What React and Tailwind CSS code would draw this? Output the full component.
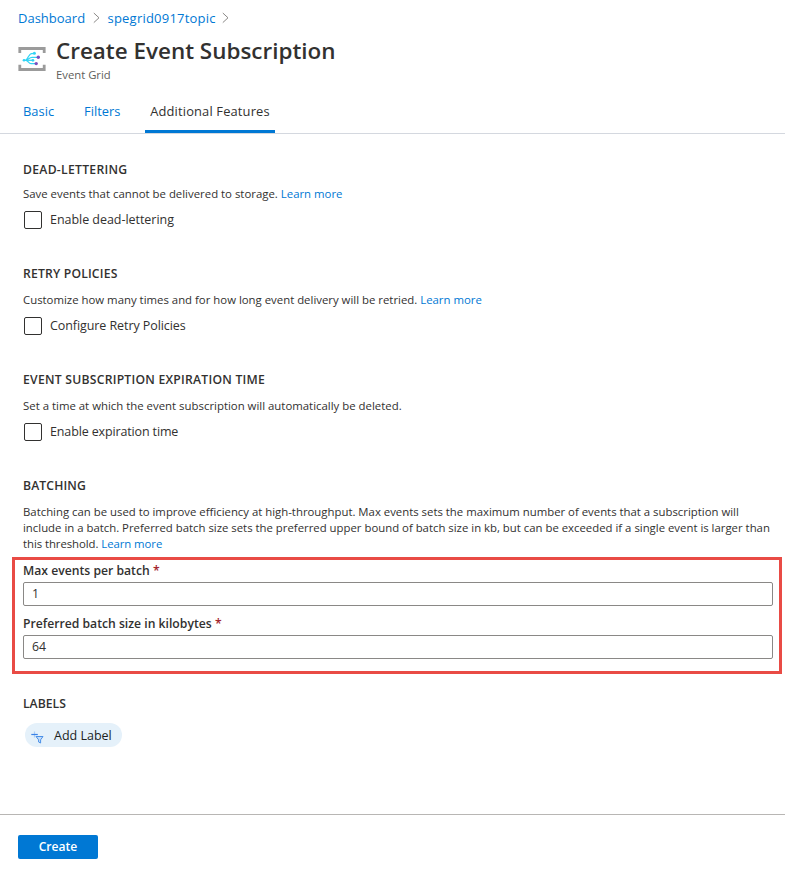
import React from "react";

const link = "text-[#0078d4]";

function Chevron() {
  return (
    <svg width="7" height="12" viewBox="0 0 7 12" fill="none" stroke="#8a8886" strokeWidth="1" className="shrink-0">
      <path d="M0.8 1 L6 5.8 L0.8 10.6" />
    </svg>
  );
}

function EventGridIcon() {
  return (
    <svg width="28" height="26" viewBox="0 0 28 26" fill="none" className="mt-[6px] shrink-0">
      <path d="M1.8 7V2.5H26.2V7M1.8 18.8V23.5H26.2V18.8" stroke="#9b9b9b" strokeWidth="2.8" />
      <g stroke="#32d4f5" strokeWidth="1.2">
        <path d="M5.5 14.3H14.7" />
        <path d="M7.5 14.3C9 14 9.5 11.8 10.8 10L12.3 8.2C12.8 7.5 13.5 7.3 16.3 7.3" />
        <path d="M8.5 14C10.5 13.5 11.5 11.3 14 11.3H20" />
        <path d="M8 14.4C10.5 14.6 10.5 17.6 13 17.6H17.5" />
      </g>
      <g fill="#32d4f5">
        <circle cx="6" cy="14.3" r="1.3" />
        <circle cx="16.4" cy="7.3" r="1.5" />
        <circle cx="14.9" cy="14.3" r="1.4" />
      </g>
      <g fill="#7a4fc0">
        <circle cx="20.3" cy="11.3" r="1.7" />
        <circle cx="18.2" cy="17.6" r="1.7" />
      </g>
    </svg>
  );
}

function AddFilterIcon() {
  return (
    <svg width="13" height="13" viewBox="0 0 13 13" fill="none" className="mt-[4px] shrink-0">
      <path d="M3.5 0.5V6.5" stroke="#a9cdf7" strokeWidth="1.2" />
      <path d="M0.3 3.5H6.8" stroke="#3b82e6" strokeWidth="1.2" />
      <path d="M5 5.5H12L9.6 8.8V12L7.6 11V8.8Z" fill="#c5ddf8" stroke="#4a90e8" strokeWidth="1" />
    </svg>
  );
}

function Heading({ children, className = "" }) {
  return <h2 className={"pt-px text-[12.2px] leading-4 font-semibold whitespace-nowrap " + className}>{children}</h2>;
}

function Check({ children, className = "" }) {
  return (
    <label className="mt-[9px] ml-px flex h-[18px] items-center">
      <span className="size-[18px] rounded-[2px] border border-[#323130]" />
      <span className={"ml-2 text-[12.5px] leading-[18px] whitespace-nowrap " + className}>{children}</span>
    </label>
  );
}

function Field({ label, value, className = "" }) {
  return (
    <div>
      <div className={"text-[12.2px] leading-[18px] font-semibold whitespace-nowrap " + className}>
        {label} <span className="text-[#a4262c]">*</span>
      </div>
      <div className="mt-[2px] flex h-6 items-center rounded-[2px] border border-[#8a8886] pl-2 text-[12.3px]">{value}</div>
    </div>
  );
}

export default function App() {
  return (
    <div className="flex h-[871px] w-[785px] flex-col overflow-hidden bg-white font-['Open_Sans','Noto_Sans',sans-serif] text-[#323130]">
      <nav className={"mt-2 flex h-5 items-center pl-[18px] text-[13px] leading-5 " + link}>
        <span className="w-[68px] whitespace-nowrap">Dashboard</span>
        <span className="ml-[7px]"><Chevron /></span>
        <span className="ml-[7.5px] w-[108px] tracking-[0.22px] whitespace-nowrap">spegrid0917topic</span>
        <span className="ml-[6.5px]"><Chevron /></span>
      </nav>
      <header className="mt-3 flex h-[44px] pl-[18px]">
        <EventGridIcon />
        <div className="ml-[10px]">
          <h1 className="h-[22px] text-[22.45px] leading-[22px] font-semibold whitespace-nowrap">Create Event Subscription</h1>
          <div className="mt-[5px] text-[11.3px] leading-4 whitespace-nowrap text-[#605e5c]">Event Grid</div>
        </div>
      </header>
      <div className="mt-[14px] flex h-[36px] border-b border-[#d4d8df] pl-[23px] text-[12.9px] leading-[27px]">
        <span className={"w-[61px] " + link}>Basic</span>
        <span className={"w-[61px] " + link}>Filters</span>
        <span className="h-[35px] w-[130px] border-b-3 border-[#0078d4] text-center tracking-[0.15px] whitespace-nowrap">Additional Features</span>
      </div>

      <main className="flex h-[680px] flex-col px-[23px] pt-[27px]">
        <section className="h-[104px]">
          <Heading className="tracking-[0.28px]">DEAD-LETTERING</Heading>
          <p className="mt-2 text-[11.4px] leading-4 whitespace-nowrap">
            Save events that cannot be delivered to storage. <span className={link}>Learn more</span>
          </p>
          <Check className="tracking-[-0.04px]">Enable dead-lettering</Check>
        </section>
        <section className="h-[106px]">
          <Heading className="tracking-[0.18px]">RETRY POLICIES</Heading>
          <p className="mt-[10px] text-[11.38px] leading-4 whitespace-nowrap">
            Customize how many times and for how long event delivery will be retried. <span className={link}>Learn more</span>
          </p>
          <Check className="tracking-[-0.08px]">Configure Retry Policies</Check>
        </section>
        <section className="h-[106px]">
          <Heading className="tracking-[0.24px]">EVENT SUBSCRIPTION EXPIRATION TIME</Heading>
          <p className="mt-[10px] text-[11.4px] leading-4 whitespace-nowrap">Set a time at which the event subscription will automatically be deleted.</p>
          <Check className="tracking-[-0.14px]">Enable expiration time</Check>
        </section>
        <section className="h-[218px]">
          <Heading className="tracking-[0.12px]">BATCHING</Heading>
          <div className="mt-[10px] text-[11.37px] leading-4 whitespace-nowrap">
            <p>Batching can be used to improve efficiency at high-throughput. Max events sets the maximum number of events that a subscription will</p>
            <p>include in a batch. Preferred batch size sets the preferred upper bound of batch size in kb, but can be exceeded if a single event is larger than</p>
            <p className="tracking-[-0.06px]">this threshold. <span className={link}>Learn more</span></p>
          </div>
          <div className="mt-[5px] -mr-[20px] -ml-[11px] flex h-[117px] flex-col gap-[9px] border-3 border-[#e94b45] pt-[2px] pr-[6px] pl-2">
            <Field label="Max events per batch" value="1" />
            <Field label="Preferred batch size in kilobytes" value="64" />
          </div>
        </section>
        <section>
          <Heading>LABELS</Heading>
          <button className="mt-[11px] ml-[2px] flex h-6 w-[97px] items-center rounded-full bg-[#e5f1fa] pl-[6px] text-[12.5px] text-[#201f1e]">
            <AddFilterIcon />
            <span className="ml-[10px] pt-[2px] whitespace-nowrap">Add Label</span>
          </button>
        </section>
      </main>
      <footer className="h-[57px] border-t border-[#b8b6b4] pt-5 pl-[18px]">
        <button className="flex h-6 w-20 items-center justify-center rounded-[2px] bg-[#0078d4] text-[12.1px] font-semibold text-white">Create</button>
      </footer>
    </div>
  );
}
